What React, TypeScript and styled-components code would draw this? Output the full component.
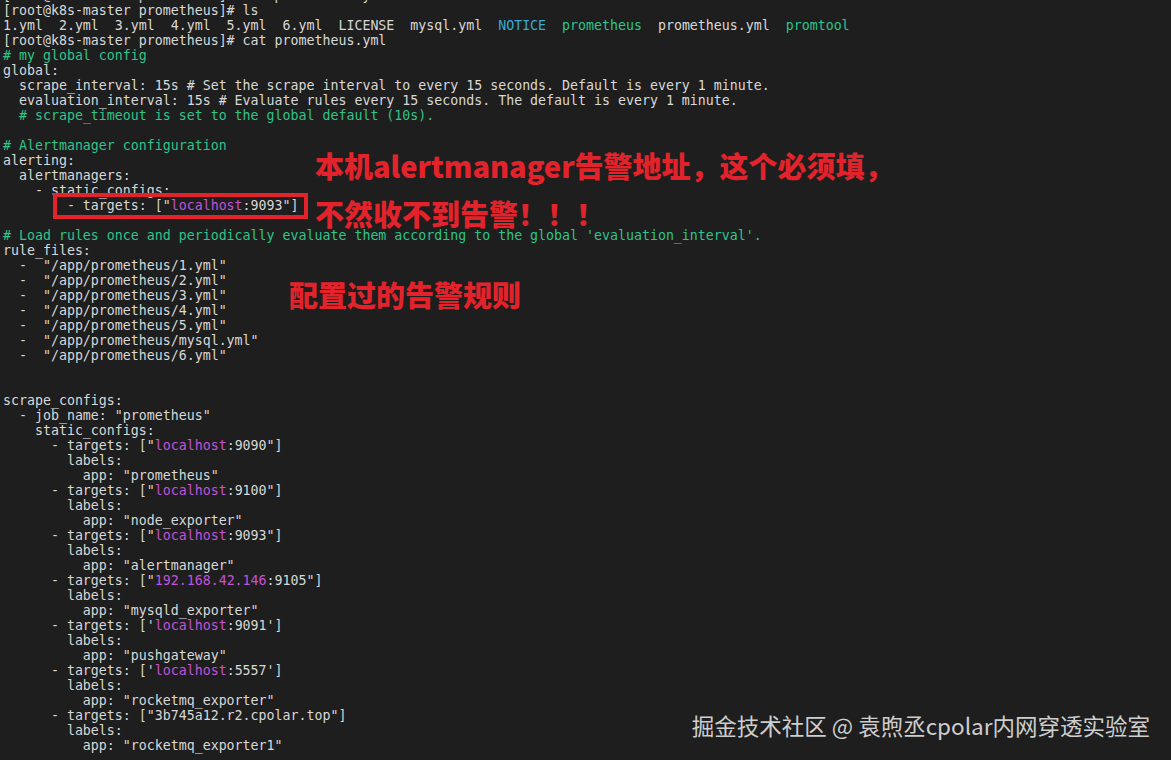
import React from "react";
import styled, { createGlobalStyle } from "styled-components";

const GlobalStyle = createGlobalStyle`
  html, body { margin: 0; padding: 0; background: #1e1e1e; }
  #root { width: 1171px; height: 760px; }
`;

type Tone = "plain" | "comment" | "dir" | "exec" | "host";
type Seg = [Tone, string];

const toneColor: Record<Tone, string> = {
  plain: "#d8d8d8",
  comment: "#2ec48a",
  dir: "#3ba8d8",
  exec: "#2ec48a",
  host: "#c253d8",
};

const Screen = styled.div`
  position: relative;
  width: 1171px;
  height: 760px;
  overflow: hidden;
  background: #1e1e1e;
`;

const Terminal = styled.div`
  display: flex;
  flex-direction: column;
  margin-top: -12px;
  padding: 0 3px;
  font-family: "DejaVu Sans Mono", "Liberation Mono", monospace;
  font-size: 13.28px;
  color: #d8d8d8;
`;

const Line = styled.div`
  height: 15px;
  line-height: 15px;
  white-space: pre;
`;

const Token = styled.span<{ $tone: Tone }>`
  color: ${(p) => toneColor[p.$tone]};
`;

const CalloutStack = styled.div<{ $left: number; $top: number }>`
  position: absolute;
  left: ${(p) => p.$left}px;
  top: ${(p) => p.$top}px;
  display: flex;
  flex-direction: column;
  gap: 19px;
`;

const Callout = styled.div`
  font-family: "Noto Sans CJK SC", "Noto Sans", sans-serif;
  font-weight: 900;
  font-size: 29px;
  line-height: 29px;
  color: #e3232b;
  white-space: nowrap;
`;

const Highlight = styled.div`
  position: absolute;
  left: 53px;
  top: 193px;
  width: 255px;
  height: 26px;
  box-sizing: border-box;
  border: 4px solid #e3232b;
`;

const Watermark = styled.div`
  position: absolute;
  right: 21px;
  top: 711px;
  font-family: "Noto Sans CJK SC", "Noto Sans", sans-serif;
  font-size: 22.5px;
  line-height: 28px;
  color: rgba(232, 232, 232, 0.88);
  white-space: nowrap;
`;

const p = (t: string): Seg => ["plain", t];
const c = (t: string): Seg => ["comment", t];
const h = (t: string): Seg => ["host", t];

const target = (q: string, host: string, port: string, indent = "      "): Seg[] => [
  p(`${indent}- targets: [${q}`),
  h(host),
  p(`:${port}${q}]`),
];

const lines: Seg[][] = [
  [p("[root@k8s-master prometheus]# vim prometheus.yml")],
  [p("[root@k8s-master prometheus]# ls")],
  [
    p("1.yml  2.yml  3.yml  4.yml  5.yml  6.yml  LICENSE  mysql.yml  "),
    ["dir", "NOTICE"],
    p("  "),
    ["exec", "prometheus"],
    p("  prometheus.yml  "),
    ["exec", "promtool"],
  ],
  [p("[root@k8s-master prometheus]# cat prometheus.yml")],
  [c("# my global config")],
  [p("global:")],
  [p("  scrape_interval: 15s # Set the scrape interval to every 15 seconds. Default is every 1 minute.")],
  [p("  evaluation_interval: 15s # Evaluate rules every 15 seconds. The default is every 1 minute.")],
  [p("  "), c("# scrape_timeout is set to the global default (10s).")],
  [],
  [c("# Alertmanager configuration")],
  [p("alerting:")],
  [p("  alertmanagers:")],
  [p("    - static_configs:")],
  target('"', "localhost", "9093", "        "),
  [],
  [c("# Load rules once and periodically evaluate them according to the global 'evaluation_interval'.")],
  [p("rule_files:")],
  [p('  -  "/app/prometheus/1.yml"')],
  [p('  -  "/app/prometheus/2.yml"')],
  [p('  -  "/app/prometheus/3.yml"')],
  [p('  -  "/app/prometheus/4.yml"')],
  [p('  -  "/app/prometheus/5.yml"')],
  [p('  -  "/app/prometheus/mysql.yml"')],
  [p('  -  "/app/prometheus/6.yml"')],
  [],
  [],
  [p("scrape_configs:")],
  [p('  - job_name: "prometheus"')],
  [p("    static_configs:")],
  target('"', "localhost", "9090"),
  [p("        labels:")],
  [p('          app: "prometheus"')],
  target('"', "localhost", "9100"),
  [p("        labels:")],
  [p('          app: "node_exporter"')],
  target('"', "localhost", "9093"),
  [p("        labels:")],
  [p('          app: "alertmanager"')],
  target('"', "192.168.42.146", "9105"),
  [p("        labels:")],
  [p('          app: "mysqld_exporter"')],
  target("'", "localhost", "9091"),
  [p("        labels:")],
  [p('          app: "pushgateway"')],
  target("'", "localhost", "5557"),
  [p("        labels:")],
  [p('          app: "rocketmq_exporter"')],
  [p('      - targets: ["3b745a12.r2.cpolar.top"]')],
  [p("        labels:")],
  [p('          app: "rocketmq_exporter1"')],
];

export default function App() {
  return (
    <>
      <GlobalStyle />
      <Screen>
        <Terminal>
          {lines.map((segs, i) => (
            <Line key={i}>
              {segs.length === 0
                ? " "
                : segs.map(([tone, text], j) => (
                    <Token key={j} $tone={tone}>
                      {text}
                    </Token>
                  ))}
            </Line>
          ))}
        </Terminal>
        <Highlight />
        <CalloutStack $left={315} $top={151}>
          <Callout>本机alertmanager告警地址，这个必须填，</Callout>
          <Callout>不然收不到告警！！！</Callout>
        </CalloutStack>
        <CalloutStack $left={289} $top={280}>
          <Callout>配置过的告警规则</Callout>
        </CalloutStack>
        <Watermark>掘金技术社区 @ 袁煦丞cpolar内网穿透实验室</Watermark>
      </Screen>
    </>
  );
}
